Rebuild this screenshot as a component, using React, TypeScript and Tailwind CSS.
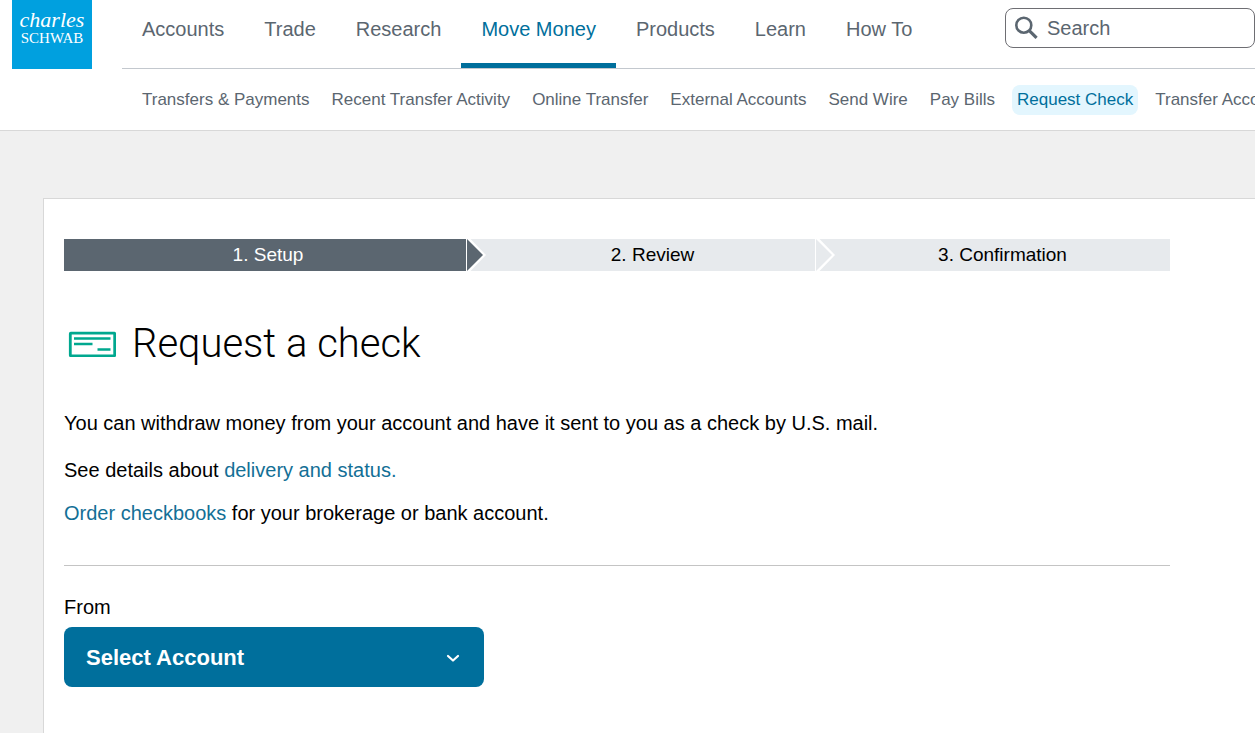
import React, { useState } from "react";

const mainLinks = ["Accounts", "Trade", "Research", "Move Money", "Products", "Learn", "How To"];

const subLinks = [
    "Transfers & Payments",
    "Recent Transfer Activity",
    "Online Transfer",
    "External Accounts",
    "Send Wire",
    "Pay Bills",
    "Request Check",
    "Transfer Account",
];

function Logo() {
    return (
        <a
            href="#"
            className="flex h-[69px] w-20 shrink-0 flex-col items-center bg-[#00a0df] pt-2 font-['Liberation_Serif',serif] text-white"
        >
            <span className="text-[22px] leading-6 italic">charles</span>
            <span className="text-[15px] leading-3">SCHWAB</span>
        </a>
    );
}

function SearchBox() {
    return (
        <label className="mt-2 flex h-10 w-[250px] shrink-0 items-center gap-2 rounded-lg border border-[#6e6e73] bg-white pr-2 pl-[9px]">
            <svg className="h-6 w-6 shrink-0" viewBox="0 0 24 24" fill="none" stroke="#5b6670">
                <circle cx="8.8" cy="9.2" r="7.5" strokeWidth="2.6" />
                <path d="M14 14.4L21.6 21.8" strokeWidth="3.2" />
            </svg>
            <input
                type="search"
                aria-label="Search"
                placeholder="Search"
                className="w-full min-w-0 bg-transparent text-xl text-[#5b6670] outline-none placeholder:text-[#5b6670]"
            />
        </label>
    );
}

function Header() {
    return (
        <header className="overflow-hidden border-b border-[#d8d8d8] bg-white text-[#5b6670]">
            <div className="flex pl-3">
                <Logo />
                <div className="ml-[30px] flex flex-1 justify-between border-b border-[#c3c8ce]">
                    <nav className="flex">
                        {mainLinks.map((link) => (
                            <a
                                key={link}
                                href="#"
                                className={
                                    link === "Move Money"
                                        ? "h-[68px] border-b-5 border-[#006f9c] px-5 pt-4 text-xl leading-[26px] whitespace-nowrap text-[#006f9c]"
                                        : "h-[68px] px-5 pt-4 text-xl leading-[26px] whitespace-nowrap"
                                }
                            >
                                {link}
                            </a>
                        ))}
                    </nav>
                    <SearchBox />
                </div>
            </div>
            <nav className="flex gap-3 pt-4 pb-[15px] pl-[137px]">
                {subLinks.map((link) => (
                    <a
                        key={link}
                        href="#"
                        className={
                            link === "Request Check"
                                ? "rounded-lg bg-[#e3f6fe] px-[5px] text-[17px] leading-[30px] whitespace-nowrap text-[#006f9c]"
                                : "px-[5px] text-[17px] leading-[30px] whitespace-nowrap"
                        }
                    >
                        {link}
                    </a>
                ))}
            </nav>
        </header>
    );
}

/* Arrow head that sits over the start of the following step */
function StepArrow({ fill }: { fill: string }) {
    return (
        <svg className="absolute top-0 left-0 h-8 w-5" viewBox="0 0 20 32">
            <path d="M0 0H4.5L20 16L4.5 32H0Z" fill="#fff" />
            <path d="M1 0L17 16L1 32Z" fill={fill} />
        </svg>
    );
}

function Steps() {
    return (
        <ol className="grid h-8 grid-cols-[402fr_349fr_355fr] text-[19px] leading-8 text-black">
            <li className="bg-[#5b6670] pl-1.5 text-center text-white">1. Setup</li>
            <li className="relative bg-[#e7eaed] pl-6 text-center">
                <StepArrow fill="#5b6670" />
                2. Review
            </li>
            <li className="relative bg-[#e7eaed] pl-5 text-center">
                <StepArrow fill="#e7eaed" />
                3. Confirmation
            </li>
        </ol>
    );
}

function CheckIcon() {
    return (
        <svg className="h-[26px] w-12" viewBox="0 0 48 26" fill="none" stroke="#00a88f">
            <rect x="2.3" y="2.2" width="44.4" height="22.6" rx="0.5" strokeWidth="2.8" />
            <path d="M6 7.6H42.5M6 13H24.5M29.5 18.4H42.5" strokeWidth="2.5" />
        </svg>
    );
}

export default function App() {
    const [account, setAccount] = useState("");

    return (
        <div className="flex min-h-screen flex-col bg-[#f0f0f0] font-['Liberation_Sans',Arial,sans-serif] text-black">
            <Header />
            <main className="mt-[67px] ml-[43px] flex-1 border-t border-l border-[#d8d8d8] bg-white pt-10 pr-[85px] pb-11 pl-5">
                <Steps />

                <div className="mt-12 flex items-center gap-4 pl-1">
                    <CheckIcon />
                    <h1 className="font-['Roboto',sans-serif] text-[40px] leading-[50px] font-light">Request a check</h1>
                </div>

                <div className="mt-[41px] text-xl leading-[27px]">
                    <p>You can withdraw money from your account and have it sent to you as a check by U.S. mail.</p>
                    <p className="mt-5">
                        See details about <a href="#" className="text-[#136f96]">delivery and status.</a>
                    </p>
                    <p className="mt-4">
                        <a href="#" className="text-[#136f96]">Order checkbooks</a> for your brokerage or bank account.
                    </p>
                </div>

                <hr className="mt-[38px] border-[#c4c4c4]" />

                <label htmlFor="from-account" className="mt-7 block text-xl leading-[27px]">
                    From
                </label>
                <div className="relative mt-1.5 max-w-[420px]">
                    <select
                        id="from-account"
                        value={account}
                        onChange={(e) => setAccount(e.target.value)}
                        className="h-[60px] w-full appearance-none rounded-lg bg-[#006f9c] px-[22px] text-[22px] font-bold text-white"
                    >
                        <option value="">Select Account</option>
                    </select>
                    <svg
                        className="pointer-events-none absolute top-6 right-6 h-3.5 w-3.5"
                        viewBox="0 0 14 14"
                        fill="none"
                        stroke="#fff"
                        strokeWidth="2.2"
                        strokeLinecap="round"
                        strokeLinejoin="round"
                    >
                        <path d="M2 5L7 9.5L12 5" />
                    </svg>
                </div>
            </main>
        </div>
    );
}
